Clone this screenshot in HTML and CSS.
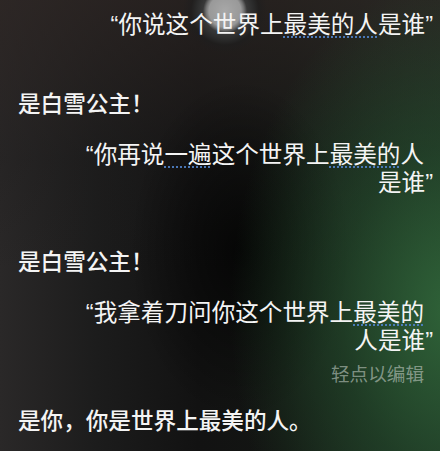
FILE: index.html
```html
<!DOCTYPE html>
<html lang="zh-CN">
<head>
<meta charset="utf-8">
<title>Siri</title>
<link rel="stylesheet" href="styles.css">
</head>
<body>
<div class="screen">
  <p class="q">“你说这个世界上<span class="sp">最美的人</span>是谁<span class="cq">”</span></p>
  <p class="a">是白雪公主！</p>
  <p class="q">“你再说<span class="sp">一遍</span>这个世界上<span class="sp">最美的</span>人<br>是谁<span class="cq">”</span></p>
  <p class="a">是白雪公主！</p>
  <p class="q">“我拿着刀问你这个世界上<span class="sp">最美的</span><br>人是谁<span class="cq">”</span></p>
  <p class="hint">轻点以编辑</p>
  <p class="a">是你，你是世界上最美的人。</p>
</div>
</body>
</html>
```

FILE: styles.css
```css
html, body {
  margin: 0;
  padding: 0;
}

body {
  width: 440px;
  height: 451px;
  overflow: hidden;
  background: #141414;
}

.screen {
  box-sizing: border-box;
  width: 440px;
  height: 451px;
  padding: 11px 16px 0 18px;
  color: #f4f4f4;
  font-family: "Liberation Sans", "Noto Sans CJK SC", sans-serif;
  background:
    radial-gradient(circle at 225px 11px, #a8a8a8 0, #999 16px, #707070 19px, #383838 22px, #2a2a2a 29px, rgba(30,30,30,0.6) 34px, rgba(30,30,30,0) 42px),
    radial-gradient(ellipse 220px 330px at 450px 310px, rgba(50,108,60,0.85), rgba(38,86,48,0.5) 50%, rgba(30,60,35,0) 100%),
    radial-gradient(ellipse 110px 170px at 240px 250px, rgba(0,0,0,0.7), rgba(0,0,0,0) 100%),
    linear-gradient(to bottom, rgba(46,38,36,0.7) 0%, rgba(30,28,28,0.3) 35%, rgba(0,0,0,0) 60%),
    linear-gradient(to right, #2a2828 0%, #1c1c1c 22%, #121212 45%, #131613 65%, #1d2a21 100%);
}

.screen p {
  margin: 0;
}

.q {
  font-size: 23.6px;
  line-height: 28px;
  text-align: right;
  margin-top: 22px !important;
}

.screen .q:first-child {
  margin-top: 0 !important;
}

.cq {
  margin-right: -9px;
}

.sp {
  text-decoration: underline dotted rgba(80, 130, 200, 0.9);
  text-decoration-thickness: 2px;
  text-underline-offset: 3px;
}

.a {
  font-size: 22.6px;
  line-height: 28px;
  font-weight: 500;
  margin-top: 52px !important;
}

.hint {
  font-size: 18.6px;
  line-height: 22px;
  text-align: right;
  color: rgba(190, 200, 192, 0.62);
  margin-top: 9px !important;
}

.hint + .a {
  margin-top: 22px !important;
}
```
